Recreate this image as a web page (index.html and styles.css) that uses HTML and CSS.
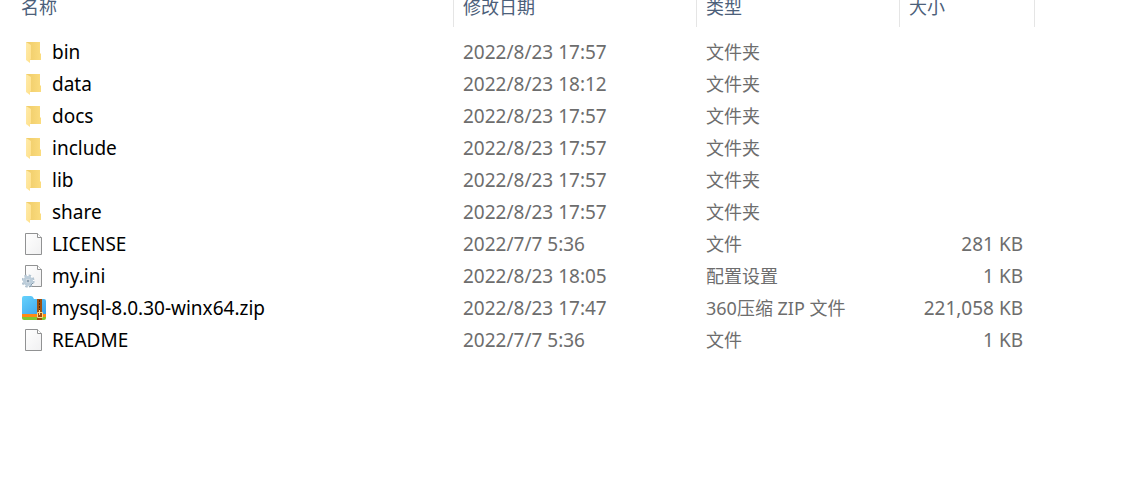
FILE: index.html
```html
<!DOCTYPE html>
<html lang="zh-CN">

<head>
    <meta charset="UTF-8">
    <meta name="viewport" content="width=device-width, initial-scale=1.0">
    <title>mysql-8.0.30-winx64</title>
    <link rel="stylesheet" href="styles.css">
</head>

<body>
    <!-- shared icons -->
    <svg class="icon-defs" aria-hidden="true">
        <defs>
            <linearGradient id="folder-back" x1="0" y1="0" x2="1" y2="0">
                <stop offset="0" stop-color="#efcb68" />
                <stop offset="1" stop-color="#fbdc7e" />
            </linearGradient>
            <linearGradient id="folder-front" x1="0" y1="0" x2="1" y2="1">
                <stop offset="0" stop-color="#ffebaa" />
                <stop offset="1" stop-color="#ffe08a" />
            </linearGradient>
            <linearGradient id="paper" x1="0" y1="0" x2="1" y2="1">
                <stop offset="0" stop-color="#ffffff" />
                <stop offset="1" stop-color="#f0f0f1" />
            </linearGradient>
            <linearGradient id="zip-blue" x1="0" y1="0" x2="1" y2="1">
                <stop offset="0" stop-color="#66d2fc" />
                <stop offset="1" stop-color="#389fea" />
            </linearGradient>
        </defs>
        <symbol id="icon-folder" viewBox="0 0 24 24">
            <path d="M4 2h14v11l1 1v6H4z" fill="url(#folder-back)" />
            <path d="M4 2l5 3v14l-1 1v3l-4-3z" fill="url(#folder-front)" />
        </symbol>
        <symbol id="icon-file" viewBox="0 0 24 24">
            <path d="M3.500 1.500h12l4 4v17h-16z" fill="url(#paper)" stroke="#919293" />
            <path d="M15.500 1.500v4h4" fill="#fff" stroke="#919293" />
        </symbol>
        <symbol id="icon-ini" viewBox="0 0 24 24">
            <use href="#icon-file" />
            <circle cx="6" cy="17" r="6" fill="#fff" />
            <circle cx="6" cy="17" r="5.600" fill="none" stroke="#b3c4d1" stroke-width="2" stroke-dasharray="2.400 2" />
            <circle cx="6" cy="17" r="3.500" fill="#eef4f8" stroke="#bccdda" stroke-width="3" />
            <circle cx="6" cy="17" r="1.500" fill="#8da0b0" />
            <path d="M9 21l2-2M7 23l2-1" stroke="#8498a9" />
        </symbol>
        <symbol id="icon-zip" viewBox="0 0 24 24">
            <path d="M0 2q0-2 2-2h7q2 0 3 3h10q2 0 2 2v14H0z" fill="url(#zip-blue)" />
            <path d="M0 18h24v4H0z" fill="#ff8a14" />
            <path d="M0 21h24v1q0 2-2 2H2q-2 0-2-2z" fill="#80c832" />
            <path d="M15 3h5v21h-5z" fill="#a0500e" />
            <path d="M17.500 4v11" stroke="#4f250b" stroke-dasharray="2 1" />
            <path d="M15.500 16.500h5v5h-5zM17.500 14v5" fill="none" stroke="#ffd883" />
        </symbol>
    </svg>

    <table class="file-list">
        <thead>
            <tr>
                <th class="col-name">名称</th>
                <th class="col-date">修改日期</th>
                <th class="col-type">类型</th>
                <th class="col-size">大小</th>
            </tr>
        </thead>
        <tbody>
            <tr>
                <td class="name"><div class="entry"><svg class="icon"><use href="#icon-folder" /></svg>bin</div></td>
                <td>2022/8/23 17:57</td>
                <td class="type">文件夹</td>
                <td class="size"></td>
            </tr>
            <tr>
                <td class="name"><div class="entry"><svg class="icon"><use href="#icon-folder" /></svg>data</div></td>
                <td>2022/8/23 18:12</td>
                <td class="type">文件夹</td>
                <td class="size"></td>
            </tr>
            <tr>
                <td class="name"><div class="entry"><svg class="icon"><use href="#icon-folder" /></svg>docs</div></td>
                <td>2022/8/23 17:57</td>
                <td class="type">文件夹</td>
                <td class="size"></td>
            </tr>
            <tr>
                <td class="name"><div class="entry"><svg class="icon"><use href="#icon-folder" /></svg>include</div></td>
                <td>2022/8/23 17:57</td>
                <td class="type">文件夹</td>
                <td class="size"></td>
            </tr>
            <tr>
                <td class="name"><div class="entry"><svg class="icon"><use href="#icon-folder" /></svg>lib</div></td>
                <td>2022/8/23 17:57</td>
                <td class="type">文件夹</td>
                <td class="size"></td>
            </tr>
            <tr>
                <td class="name"><div class="entry"><svg class="icon"><use href="#icon-folder" /></svg>share</div></td>
                <td>2022/8/23 17:57</td>
                <td class="type">文件夹</td>
                <td class="size"></td>
            </tr>
            <tr>
                <td class="name"><div class="entry"><svg class="icon"><use href="#icon-file" /></svg>LICENSE</div></td>
                <td>2022/7/7 5:36</td>
                <td class="type">文件</td>
                <td class="size">281 KB</td>
            </tr>
            <tr>
                <td class="name"><div class="entry"><svg class="icon"><use href="#icon-ini" /></svg>my.ini</div></td>
                <td>2022/8/23 18:05</td>
                <td class="type">配置设置</td>
                <td class="size">1 KB</td>
            </tr>
            <tr>
                <td class="name"><div class="entry"><svg class="icon"><use href="#icon-zip" /></svg>mysql-8.0.30-winx64.zip</div></td>
                <td>2022/8/23 17:47</td>
                <td class="type">360压缩 ZIP 文件</td>
                <td class="size">221,058 KB</td>
            </tr>
            <tr>
                <td class="name"><div class="entry"><svg class="icon"><use href="#icon-file" /></svg>README</div></td>
                <td>2022/7/7 5:36</td>
                <td class="type">文件</td>
                <td class="size">1 KB</td>
            </tr>
        </tbody>
    </table>
</body>

</html>
```
FILE: styles.css
```css
body {
    margin: 0;
    padding-right: 93px;
    background-color: #fff;
    color: #6d6d6d;
    font-family: "Noto Sans", "Noto Sans CJK SC", sans-serif;
    font-size: 19px;
}

.icon-defs {
    display: block;
    width: 0;
    height: 0;
}

.file-list {
    width: 100%;
    table-layout: fixed;
    border-collapse: separate;
    border-spacing: 0;
}

/* header row */
th {
    padding: 0 0 12px 9px;
    border-right: 1px solid #e5e5e5;
    color: #4c607a;
    font-size: 18px;
    font-weight: 400;
    line-height: 15px;
    text-align: left;
}

th.col-name {
    padding-left: 21px;
}

.col-date {
    width: 233px;
}

.col-type {
    width: 193px;
}

.col-size {
    width: 125px;
}

/* space between the header and the first file */
tbody::before {
    content: "";
    display: block;
    height: 9px;
}

td {
    height: 32px;
    padding: 0 0 0 9px;
    line-height: 32px;
    white-space: nowrap;
}

td.name {
    padding-left: 22px;
    color: #000;
}

td.type {
    font-size: 18px;
}

td.size {
    padding-right: 12px;
    text-align: right;
}

.entry {
    display: flex;
    align-items: center;
    gap: 6px;
    height: 32px;
}

.icon {
    flex: none;
    width: 24px;
    height: 24px;
}
```
